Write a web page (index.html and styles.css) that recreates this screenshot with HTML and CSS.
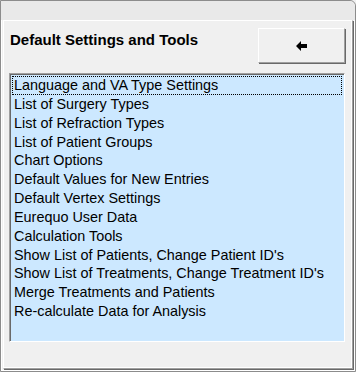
FILE: index.html
```html
<!DOCTYPE html>
<html lang="en">
<head>
  <meta charset="UTF-8" />
  <title>Default Settings and Tools</title>
  <link rel="stylesheet" href="styles.css">
</head>
<body>
  <div class="window">
    <div class="titlebar"></div>
    <div class="client">
      <div class="header">
        <div class="header-title">Default Settings and Tools</div>
        <button class="back-btn">
          <svg width="12" height="10" viewBox="0 0 12 10">
            <path d="M0 5 L5 0 L5 3 L11 3 L11 7 L5 7 L5 10 Z" fill="#000"/>
          </svg>
        </button>
      </div>

      <div class="list-box">
        <div class="list-item focused">Language and VA Type Settings</div>
        <div class="list-item">List of Surgery Types</div>
        <div class="list-item">List of Refraction Types</div>
        <div class="list-item">List of Patient Groups</div>
        <div class="list-item">Chart Options</div>
        <div class="list-item">Default Values for New Entries</div>
        <div class="list-item">Default Vertex Settings</div>
        <div class="list-item">Eurequo User Data</div>
        <div class="list-item">Calculation Tools</div>
        <div class="list-item">Show List of Patients, Change Patient ID's</div>
        <div class="list-item">Show List of Treatments, Change Treatment ID's</div>
        <div class="list-item">Merge Treatments and Patients</div>
        <div class="list-item">Re-calculate Data for Analysis</div>
      </div>
    </div>
  </div>
</body>
</html>
```

FILE: styles.css
```css
body {
  margin: 0;
  padding: 0;
  background-color: #f0f0f0;
  font-family: "Liberation Sans", Arial, sans-serif;
}

.window {
  width: 356px;
  height: 372px;
  box-sizing: border-box;
  border: 1px solid #8c8c8c;
  border-top-right-radius: 6px;
  background-color: #f0f0f0;
  box-shadow: inset 0 -1px 0 #ffffff, inset 1px 0 0 #ffffff, inset -1px 0 0 #ffffff;
  display: flex;
  flex-direction: column;
}

.titlebar {
  height: 19px;
  background-color: #e9e9e9;
  border-top-right-radius: 6px;
}

.client {
  flex: 1;
  margin: 0 2px 2px 2px;
  border: 1px solid #a0a0a0;
  border-top-color: #ffffff;
  border-left-color: #ffffff;
  box-shadow: inset -1px -1px 0 #ffffff, 1px 1px 0 #696969;
  display: flex;
  flex-direction: column;
  padding: 0 7px 0 5px;
}

.header {
  display: flex;
  justify-content: space-between;
  align-items: flex-start;
  height: 52px;
}

.header-title {
  font-size: 15px;
  font-weight: bold;
  margin: 10px 0 0 1px;
  color: #000;
}

.back-btn {
  width: 87px;
  height: 35px;
  margin-top: 7px;
  background-color: #f0f0f0;
  border: 1px solid #a0a0a0;
  border-top-color: #ffffff;
  border-left-color: #ffffff;
  box-shadow: 1px 1px 0 #696969;
  display: flex;
  align-items: center;
  justify-content: center;
  padding: 0;
}

.list-box {
  height: 263px;
  background-color: #cce8ff;
  border: 1px solid #ffffff;
  border-top-color: #a0a0a0;
  border-left-color: #a0a0a0;
  box-shadow: inset 1px 1px 0 #696969;
  padding: 2px 2px;
}

.list-item {
  font-size: 14.4px;
  line-height: 18.85px;
  height: 18.85px;
  padding-left: 2px;
  color: #000;
  white-space: nowrap;
}

.list-item.focused {
  outline: 1px dotted #000;
  outline-offset: -1px;
}
```
